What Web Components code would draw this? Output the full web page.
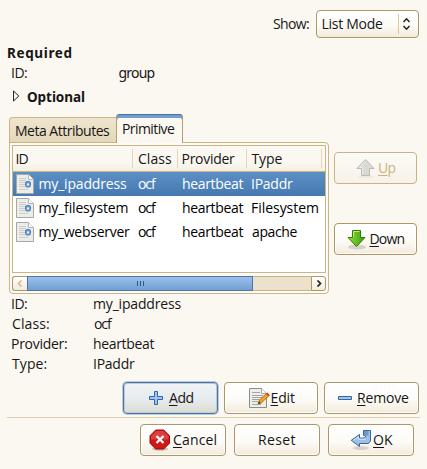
<!DOCTYPE html>
<html lang="en"><head><meta charset="utf-8"><title>Group</title>
<style>html,body{margin:0;width:427px;height:469px;overflow:hidden;background:#fbf8f1}</style></head>
<body><group-editor></group-editor>
<script>
const define=(name,html,init)=>customElements.define(name,class extends HTMLElement{
 constructor(){super();this.attachShadow({mode:'open'}).innerHTML=html}
 connectedCallback(){if(init)init(this,this.shadowRoot)}
});
const pen=document.createElement('canvas').getContext('2d');
// Label whose ink starts at its left edge and spans w pixels.
define('ui-text',`<style>:host{display:block;flex:none;white-space:nowrap;line-height:20px;height:20px}::slotted(u){text-decoration:underline;text-decoration-thickness:1px;text-underline-offset:2px}</style><slot></slot>`,el=>{
 const t=el.textContent,w=+el.getAttribute('w');
 const font=el.hasAttribute('bold')?'bold 13.5px/20px "Noto Sans",sans-serif':t==='group'?'14px/20px "Noto Sans",sans-serif':'14px/20px "Open Sans",sans-serif';
 pen.font=el.style.font=font;
 const m=pen.measureText(t),ink=m.actualBoundingBoxLeft+m.actualBoundingBoxRight;
 el.style.letterSpacing=((w-ink)/(t.length-1)).toFixed(3)+'px';
 el.style.textIndent=m.actualBoundingBoxLeft.toFixed(2)+'px';
 el.style.width=w+'px';
});
const icons={
 add:`<svg width="14" height="14"><path d="M5.5.5h3v5h5v3h-5v5h-3v-5h-5v-3h5z" fill="#9fc4ee" stroke="#3465a4"/></svg>`,
 remove:`<svg width="14" height="14"><path d="M.5 5.5h13v3H.5z" fill="#9fc4ee" stroke="#3465a4"/></svg>`,
 edit:`<svg width="22" height="22"><path d="M1.500 1.500h12l5 5v14h-17z" fill="#eeeeec" stroke="#8b8d88"/><path d="M13.500 1.500v5h5" fill="#fff" stroke="#a5a7a2"/><path d="M4 5.500h8M4 8.500h11M4 10.500h11M4 12.500h8M4 14.500h6M4 17.500h9" stroke="#a4a6a2"/><path d="M10 17l1.500-4L19 6l2.300 2.300-8 7.700z" fill="#f6a31c" stroke="#b45a00" stroke-width=".8"/><path d="M18 7l1.300-1.400 2.400 2.400-1.300 1.400z" fill="#e33b20"/><path d="M10 17l1-2.700 1.600 1.700z" fill="#333"/></svg>`,
 cancel:`<svg width="22" height="22"><ellipse cx="11" cy="20" rx="8" ry="1.800" fill="#0003"/><path d="M6.700 1h8l5.800 5.800v7.400L14.700 20h-8L1 14.200V6.800z" fill="#cf1717" stroke="#9d0808"/><path d="M7 2h7.500L19.500 7v3.500H2V7z" fill="#e45555" opacity=".65"/><path d="M7.500 7l7 7m0-7l-7 7" stroke="#fff" stroke-width="2.300"/></svg>`,
 ok:`<svg width="22" height="22"><ellipse cx="11" cy="19" rx="8" ry="2" fill="#0002"/><path d="M13.500 1.500h7v10.500l-2 2.500H9.500v3L1.200 11.300 9.500 5.500v3.500h4.500l1.500-1V6.500h-2z" fill="#9fc0e4" stroke="#3465a4"/><path d="M14 2h4.500v4.500H14z" fill="#6f99ca"/><path d="M3.500 11.200l5-3.500v2.500h7" fill="none" stroke="#d7e7f8"/></svg>`,
 down:`<svg width="20" height="21"><defs><linearGradient id="g"><stop stop-color="#8be03c"/><stop offset="1" stop-color="#3e9d0a"/></linearGradient></defs><ellipse cx="10" cy="18" rx="9" ry="2.500" fill="#0002"/><path d="M5.500 1.500h8v7h4.500L9.500 17.500 1 8.500h4.500z" fill="url(#g)" stroke="#327a08"/><path d="M6.500 8V2.500h6" fill="none" stroke="#b5ee7c"/></svg>`,
 up:`<svg width="20" height="21"><ellipse cx="10" cy="18.500" rx="8" ry="1.500" fill="#0000000c"/><path d="M5.500 17.500h8v-7H18L9.500 1.500 1 10.500h4.500z" fill="#d9dad3" stroke="#b9bab2"/><path d="M6.500 16.500v-7h-3l6-6.500" fill="none" stroke="#eeeee9"/></svg>`,
 doc:`<svg width="18" height="20" style="display:block"><path d="M.5.5h12l5 5v14H.5z" fill="#ececea" stroke="#a6a8a5"/><path d="M12.500.5v5h5" fill="#fff" stroke="#b4b6b2"/><path d="M3 4.500h7M3 6.500h7M3 8.500h6M3 10.500h6M3 12.500h6M3 15.500h9" stroke="#cbcbc8"/><rect x="9.500" y="7.500" width="5" height="5.500" rx="1.500" fill="#70a1d7" stroke="#5280b8"/><path d="M11 9.500h2v2h-2z" fill="#dceafa"/></svg>`
};
// Push button: icon plus caption, with widths given by its user.
define('ui-button',`<style>:host{display:flex;box-sizing:border-box;flex:none;height:32px;border:1px solid #aa9868;border-radius:4px;background:linear-gradient(#fff,#fdfbf7 55%,#f2ebdc);box-shadow:inset 0 0 0 1px #fffc;align-items:center}
:host([focused]){border-color:#4e739d;background:linear-gradient(#f1f4f8,#e7ebec 55%,#dadcd2);box-shadow:inset 0 0 0 1px #b9cadd,0 0 0 1px #b8cbdf}
:host([disabled]){border-color:#c8b582;color:#c8b582;background:linear-gradient(#fdfbf7,#f7f2e8);box-shadow:none}
i{display:block;flex:none}svg{display:block}</style><i></i><slot></slot>`,(el,r)=>{
 r.querySelector('i').innerHTML=icons[el.getAttribute('icon')]||'';
});
define('ui-select',`<style>:host{display:flex;box-sizing:border-box;width:103px;height:28px;border:1px solid #aa9868;border-radius:4px;background:linear-gradient(#fff,#fdfbf7 55%,#f2ebdc);padding:3px 0 0 5.500px}
b{width:1px;height:20px;background:#d8c79c;margin-left:15px}svg{margin:3px 0 0 3px}</style><slot></slot><b></b><svg width="9" height="14"><path d="M1.500 5l3-3.200 3 3.200M1.500 9l3 3.200 3-3.200" fill="none" stroke="#222" stroke-width="1.500"/></svg>`);
define('ui-field',`<style>:host{display:grid;grid-template-columns:var(--label,82px) auto;height:20px}</style><slot></slot>`);
define('ui-row',`<style>:host{display:grid;grid-template-columns:26.500px 98.500px 45px 69px auto;height:24px;align-items:center;box-sizing:border-box;color:#000}:host([selected]){background:linear-gradient(#5b8fc5,#4679b1);color:#fff}i{padding-left:3px}</style><i>${icons.doc}</i><slot></slot>`);
define('ui-head',`<style>:host{display:grid;grid-template-columns:120px 45px 69px 75px 4px;height:25px;border-bottom:1px solid #c9b684;background:linear-gradient(#fbf8f1 65%,#f5efe3);align-items:center}div{height:19px;border-right:1px solid #e2d6ba;display:flex;align-items:center}</style><div><slot name="a"></slot></div><div><slot name="b"></slot></div><div><slot name="c"></slot></div><div><slot name="d"></slot></div>`);
define('ui-scroll',`<style>:host{display:grid;grid-template-columns:15px 226px 58px 15px;height:15px;margin-top:3px}div{box-sizing:border-box;display:flex;align-items:center;justify-content:center;height:15px}
.l,.r{border:1px solid #aa9868;background:linear-gradient(#fff,#f2ebdc)}.l{border-radius:3px 0 0 3px;border-right:0}.r{border-radius:0 3px 3px 0}
.t{border:1px solid #4c77a9;background:linear-gradient(#9bc1eb,#719fd3)}.e{background:#ece2cc;border:solid #c7b482;border-width:1px 0}</style>
<div class="l"><svg width="6" height="7"><path d="M4.500 .5l-3 3 3 3" fill="none" stroke="#d0bf92" stroke-width="1.700"/></svg></div><div class="t"><svg width="7" height="5"><path d="M.5 0v5M3.500 0v5M6.500 0v5" stroke="#31588a"/></svg></div><div class="e"></div><div class="r"><svg width="6" height="7"><path d="M1.500 .5l3 3-3 3" fill="none" stroke="#222" stroke-width="1.700"/></svg></div>`);
define('ui-tabs',`<style>:host{display:block;width:320px;height:181px}
nav{display:flex;align-items:flex-end;height:29px;margin-bottom:-1px;position:relative}
.m,.p{box-sizing:border-box;border:1px solid #c9b684}.m{width:107px;height:26px;padding:3px 0 0 6px;border-radius:4px 0 0;border-right:0;background:linear-gradient(#efe5cf,#e4d7b9)}
.p{width:67px;height:29px;border-color:#b39f6c;border-width:0 1px;border-radius:3px 3px 0 0;background:#fbf8f1;padding:5px 0 0 6px;box-shadow:inset 0 1px #4c73a0,inset 0 4px #729fcf}
section{box-sizing:border-box;height:152px;border:1px solid #c9b684;border-radius:0 4px 4px;padding:2px;background:#fdfbf7}
main{height:126px;background:#fff;border:1px solid #c9b684}</style>
<nav><div class="m"><slot name="one"></slot></div><div class="p"><slot name="two"></slot></div></nav><section><main><slot></slot></main><ui-scroll></ui-scroll></section>`);
define('group-editor',`<style>:host{display:flex;flex-direction:column;width:427px;height:469px;background:#fbf8f1;color:#161616}
.show{display:flex;padding:10px 0 0 273px;height:33px;gap:7px}.show>ui-text{margin-top:4px}
.req{padding:0 0 0 8px;height:20px}.id{--label:106.500px;padding-left:12px}.opt{display:flex;padding:4px 0 0 12px;height:27px}.opt svg{margin:3px 7px 0 0}
.mid{display:flex;padding-left:9px;height:180px;gap:5px}.side{display:flex;flex-direction:column;gap:39px;padding-top:38px}
.info{padding-left:12px;height:88px}.b1{display:flex;gap:6px;padding-left:123px;height:35px}.sep{height:1px;background:#e0d1ae;margin:0 7px}.b2{display:flex;gap:8px;padding:6px 0 0 140px}</style>
<div class="show"><ui-text w="36">Show:</ui-text><ui-select><ui-text w="60.5">List Mode</ui-text></ui-select></div>
<div class="req"><ui-text bold w="63.5">Required</ui-text></div>
<ui-field class="id"><ui-text w="15">ID:</ui-text><ui-text w="36">group</ui-text></ui-field>
<div class="opt"><svg width="8" height="12"><path d="M1.500 1v10L6.800 6z" fill="none" stroke="#222"/></svg><ui-text bold w="58">Optional</ui-text></div>
<div class="mid"><ui-tabs><ui-text slot="one" w="94">Meta Attributes</ui-text><ui-text slot="two" w="52">Primitive</ui-text>
<ui-head><ui-text slot="a" style="margin-left:3.500px" w="12">ID</ui-text><ui-text slot="b" style="margin-left:5px" w="34">Class</ui-text><ui-text slot="c" style="margin-left:4.500px" w="52.5">Provider</ui-text><ui-text slot="d" style="margin-left:4.500px" w="31">Type</ui-text></ui-head>
<ui-row selected><ui-text w="87.5">my_ipaddress</ui-text><ui-text w="19">ocf</ui-text><ui-text w="60.5">heartbeat</ui-text><ui-text w="41">IPaddr</ui-text></ui-row>
<ui-row><ui-text w="88">my_filesystem</ui-text><ui-text w="19">ocf</ui-text><ui-text w="60.5">heartbeat</ui-text><ui-text w="66">Filesystem</ui-text></ui-row>
<ui-row><ui-text w="90.5">my_webserver</ui-text><ui-text w="19">ocf</ui-text><ui-text w="60.5">heartbeat</ui-text><ui-text w="45.5">apache</ui-text></ui-row></ui-tabs>
<div class="side"><ui-button icon="up" disabled style="width:83px;padding-left:21px"><ui-text style="margin-left:3px" w="16.5"><u>U</u>p</ui-text></ui-button>
<ui-button icon="down" style="width:83px;padding-left:12px"><ui-text style="margin-left:3.500px" w="34"><u>D</u>own</ui-text></ui-button></div></div>
<div class="info"><ui-field><ui-text w="15">ID:</ui-text><ui-text w="87.5">my_ipaddress</ui-text></ui-field><ui-field><ui-text w="37">Class:</ui-text><ui-text w="19">ocf</ui-text></ui-field><ui-field><ui-text w="55">Provider:</ui-text><ui-text w="60.5">heartbeat</ui-text></ui-field><ui-field><ui-text w="34.5">Type:</ui-text><ui-text w="41">IPaddr</ui-text></ui-field></div>
<div class="b1"><ui-button icon="add" focused style="width:95px;padding-left:25px"><ui-text style="margin-left:6px" w="24.5"><u>A</u>dd</ui-text></ui-button><ui-button icon="edit" style="width:94px;padding-left:23px"><ui-text style="margin-left:1.500px" w="23.5"><u>E</u>dit</ui-text></ui-button><ui-button icon="remove" style="width:95px;padding-left:13px"><ui-text style="margin-left:6px" w="51"><u>R</u>emove</ui-text></ui-button></div>
<div class="sep"></div>
<div class="b2"><ui-button icon="cancel" style="width:86px;padding-left:8px"><ui-text style="margin-left:2px" w="43.5"><u>C</u>ancel</ui-text></ui-button><ui-button style="width:86px;padding-left:24px"><ui-text w="36.5">Reset</ui-text></ui-button><ui-button icon="ok" style="width:86px;padding-left:21px"><ui-text style="margin-left:1px" w="20"><u>O</u>K</ui-text></ui-button></div>`);
</script></body></html>
